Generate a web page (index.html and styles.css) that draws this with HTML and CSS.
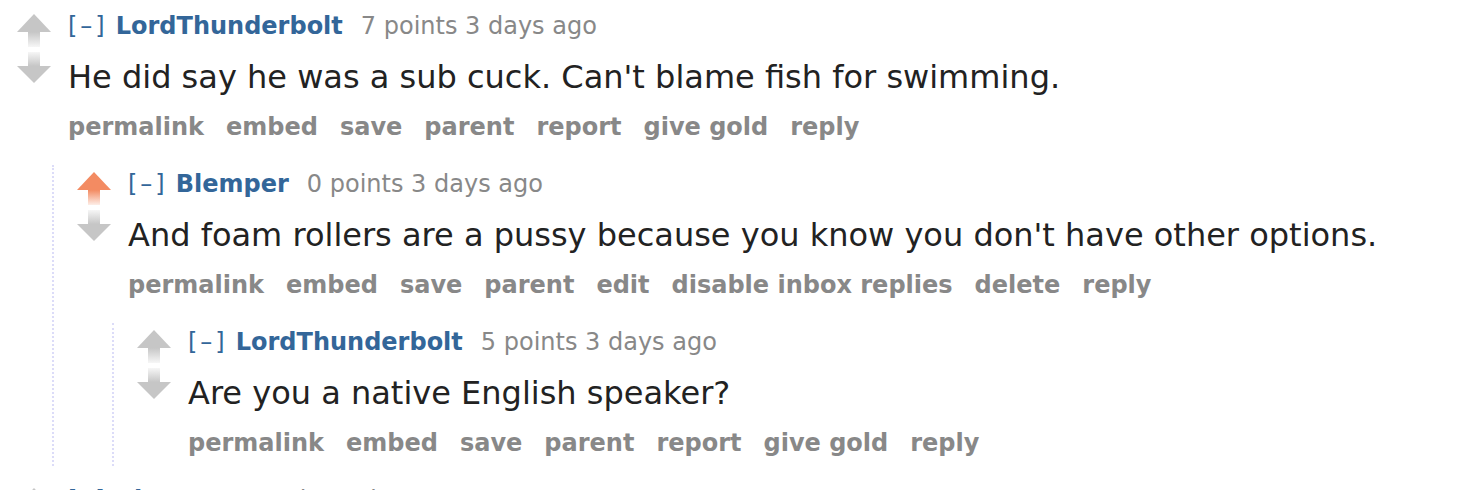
FILE: index.html
```html
<!DOCTYPE html>
<html lang="en">
<head>
<meta charset="utf-8">
<title>comments</title>
<link rel="stylesheet" href="styles.css">
</head>
<body>
<svg width="0" height="0" class="defs" aria-hidden="true">
  <defs>
    <linearGradient id="fadeUpGray" x1="0" y1="0" x2="0" y2="1">
      <stop offset="0" stop-color="#c6c6c6"/>
      <stop offset="1" stop-color="#c6c6c6" stop-opacity="0.15"/>
    </linearGradient>
    <linearGradient id="fadeDownGray" x1="0" y1="0" x2="0" y2="1">
      <stop offset="0" stop-color="#c6c6c6" stop-opacity="0.15"/>
      <stop offset="1" stop-color="#c6c6c6"/>
    </linearGradient>
    <linearGradient id="fadeUpOrange" x1="0" y1="0" x2="0" y2="1">
      <stop offset="0" stop-color="#f38b62"/>
      <stop offset="1" stop-color="#f38b62" stop-opacity="0.15"/>
    </linearGradient>
  </defs>
</svg>

<div class="thread">
  <div class="comment">
    <div class="row">
      <div class="midcol">
        <svg class="arrow" width="34" height="33" viewBox="0 0 34 33"><polygon points="17,0 34,18 0,18" fill="#c6c6c6"/><rect x="11" y="18" width="12" height="15" fill="url(#fadeUpGray)"/></svg>
        <svg class="arrow" width="34" height="31" viewBox="0 0 34 31"><rect x="11" y="0" width="12" height="14" fill="url(#fadeDownGray)"/><polygon points="0,14 34,14 17,31" fill="#c6c6c6"/></svg>
      </div>
      <div class="entry">
        <p class="tagline"><a class="expand">[–]</a><a class="author">LordThunderbolt</a><span class="score">7 points</span> <span class="time">3 days ago</span></p>
        <div class="md">He did say he was a sub cuck. Can't blame fish for swimming.</div>
        <ul class="buttons"><li>permalink</li><li>embed</li><li>save</li><li>parent</li><li>report</li><li>give gold</li><li>reply</li></ul>
      </div>
    </div>

    <div class="child">
      <div class="comment">
        <div class="row">
          <div class="midcol">
            <svg class="arrow" width="34" height="33" viewBox="0 0 34 33"><polygon points="17,0 34,18 0,18" fill="#f38b62"/><rect x="11" y="18" width="12" height="15" fill="url(#fadeUpOrange)"/></svg>
            <svg class="arrow" width="34" height="31" viewBox="0 0 34 31"><rect x="11" y="0" width="12" height="14" fill="url(#fadeDownGray)"/><polygon points="0,14 34,14 17,31" fill="#c6c6c6"/></svg>
          </div>
          <div class="entry">
            <p class="tagline"><a class="expand">[–]</a><a class="author">Blemper</a><span class="score">0 points</span> <span class="time">3 days ago</span></p>
            <div class="md">And foam rollers are a pussy because you know you don't have other options.</div>
            <ul class="buttons"><li>permalink</li><li>embed</li><li>save</li><li>parent</li><li>edit</li><li>disable inbox replies</li><li>delete</li><li>reply</li></ul>
          </div>
        </div>

        <div class="child last">
          <div class="comment">
            <div class="row">
              <div class="midcol">
                <svg class="arrow" width="34" height="33" viewBox="0 0 34 33"><polygon points="17,0 34,18 0,18" fill="#c6c6c6"/><rect x="11" y="18" width="12" height="15" fill="url(#fadeUpGray)"/></svg>
                <svg class="arrow" width="34" height="31" viewBox="0 0 34 31"><rect x="11" y="0" width="12" height="14" fill="url(#fadeDownGray)"/><polygon points="0,14 34,14 17,31" fill="#c6c6c6"/></svg>
              </div>
              <div class="entry">
                <p class="tagline"><a class="expand">[–]</a><a class="author">LordThunderbolt</a><span class="score">5 points</span> <span class="time">3 days ago</span></p>
                <div class="md">Are you a native English speaker?</div>
                <ul class="buttons"><li>permalink</li><li>embed</li><li>save</li><li>parent</li><li>report</li><li>give gold</li><li>reply</li></ul>
              </div>
            </div>
          </div>
        </div>
      </div>
    </div>
  </div>

  <div class="comment next">
    <div class="row">
      <div class="midcol">
        <svg class="arrow" width="34" height="33" viewBox="0 0 34 33"><polygon points="17,0 34,18 0,18" fill="#c6c6c6"/><rect x="11" y="18" width="12" height="15" fill="url(#fadeUpGray)"/></svg>
      </div>
      <div class="entry">
        <p class="tagline"><a class="expand">[–]</a><a class="author">Blemper</a><span class="score">1 point</span> <span class="time">3 days ago</span></p>
      </div>
    </div>
  </div>
</div>
</body>
</html>
```

FILE: styles.css
```css
html, body {
  margin: 0;
  padding: 0;
  background: #ffffff;
}

body {
  font-family: "DejaVu Sans", Verdana, sans-serif;
  color: #222222;
  overflow: hidden;
}

.defs {
  position: absolute;
  width: 0;
  height: 0;
}

.thread {
  padding: 12px 0 0 17px;
}

.row {
  display: flex;
  align-items: flex-start;
}

.midcol {
  flex: none;
  width: 34px;
  margin-right: 17px;
  padding-top: 2px;
  display: flex;
  flex-direction: column;
  gap: 5px;
}

.arrow {
  display: block;
}

.entry {
  min-width: 0;
}

.tagline {
  margin: 0;
  font-size: 24px;
  line-height: 28px;
  color: #888888;
  white-space: nowrap;
}

.expand {
  color: #369;
  letter-spacing: 3px;
  margin-right: 8px;
}

.author {
  color: #369;
  font-weight: bold;
  margin-right: 18px;
}

.md {
  margin-top: 17px;
  font-size: 32px;
  line-height: 40px;
  color: #222222;
  white-space: nowrap;
}

.buttons {
  list-style: none;
  margin: 16px 0 0 0;
  padding: 0;
  display: flex;
  gap: 22px;
  font-size: 24px;
  line-height: 28px;
  font-weight: bold;
  color: #888888;
  white-space: nowrap;
}

.child {
  margin-top: 24px;
  margin-left: 35px;
  padding: 5px 0 0 23px;
  border-left: 2px dotted #dcdcf8;
}

.child.last {
  padding-bottom: 9px;
}

.comment.next {
  margin-top: 20px;
}
```
